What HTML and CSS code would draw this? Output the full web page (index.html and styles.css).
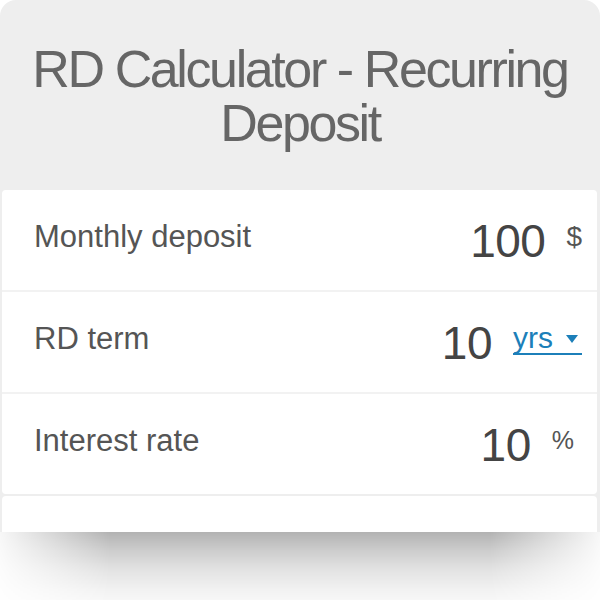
FILE: index.html
```html
<!DOCTYPE html>
<html lang="en">
<head>
    <meta charset="UTF-8" />
    <meta name="viewport" content="width=device-width, initial-scale=1.0" />
    <title>RD Calculator - Recurring Deposit</title>
    <link rel="stylesheet" href="styles.css">
</head>
<body>
    <div class="widget">
        <h1 class="title">RD Calculator - Recurring Deposit</h1>
        <div class="fields">
            <div class="group">
                <div class="row">
                    <span class="label">Monthly deposit</span>
                    <span class="value">100</span>
                    <span class="unit">$</span>
                </div>
                <div class="row">
                    <span class="label">RD term</span>
                    <span class="value">10</span>
                    <span class="unit unit-select">yrs<span class="caret"></span></span>
                </div>
                <div class="row">
                    <span class="label">Interest rate</span>
                    <span class="value">10</span>
                    <span class="unit unit-pct">%</span>
                </div>
            </div>
            <div class="group group-next"></div>
        </div>
    </div>
    <div class="shadow"></div>
</body>
</html>
```

FILE: styles.css
```css
body {
    margin: 0;
    padding: 0;
    font-family: "Liberation Sans", Arial, sans-serif;
    background-color: #fff;
}
.widget {
    width: 600px;
    height: 532px;
    overflow: hidden;
    background-color: #eee;
    border-radius: 16px 16px 0 0;
}
.shadow {
    width: 600px;
    height: 68px;
    background: linear-gradient(to bottom,
        rgba(0, 0, 0, 0.3) 0,
        rgba(0, 0, 0, 0.2) 18px,
        rgba(0, 0, 0, 0.11) 38px,
        rgba(0, 0, 0, 0.05) 58px,
        rgba(0, 0, 0, 0.03) 68px);
    -webkit-mask-image: linear-gradient(to right, rgba(0, 0, 0, 0.1), #000 110px, #000 490px, rgba(0, 0, 0, 0.1));
    mask-image: linear-gradient(to right, rgba(0, 0, 0, 0.1), #000 110px, #000 490px, rgba(0, 0, 0, 0.1));
}
.title {
    margin: 0;
    padding: 42px 20px 40px;
    text-align: center;
    font-size: 52px;
    font-weight: normal;
    line-height: 54px;
    letter-spacing: -2.4px;
    color: #666;
}
.fields {
    padding: 0 3px 0 2px;
}
.group {
    background-color: #f2f2f2;
    border-radius: 4px;
    overflow: hidden;
    margin-bottom: 2px;
}
.row {
    display: flex;
    align-items: center;
    height: 100px;
    padding: 0 15px 0 32px;
    background-color: #fff;
    margin-bottom: 2px;
}
.row:last-child {
    margin-bottom: 0;
}
.label {
    flex: 1;
    font-size: 31px;
    line-height: 1;
    color: #555;
    margin-bottom: 7px;
}
.value {
    font-size: 46px;
    line-height: 1;
    letter-spacing: -0.5px;
    color: #444;
    margin: 2px 21px 0 0;
}
.unit {
    font-size: 28px;
    line-height: 1;
    color: #555;
    margin-bottom: 7px;
}
.unit-select {
    display: flex;
    align-items: center;
    font-size: 30px;
    color: #1c7fb9;
    border-bottom: 2px solid #1c7fb9;
    margin-bottom: 6px;
    padding-bottom: 0;
}
.caret {
    width: 0;
    height: 0;
    margin: 2px 4px 0 13px;
    border-left: 6px solid transparent;
    border-right: 6px solid transparent;
    border-top: 8px solid #1c7fb9;
}
.unit-pct {
    font-size: 25px;
    margin-right: 8px;
}
.group-next {
    height: 60px;
    background-color: #fff;
}
```
